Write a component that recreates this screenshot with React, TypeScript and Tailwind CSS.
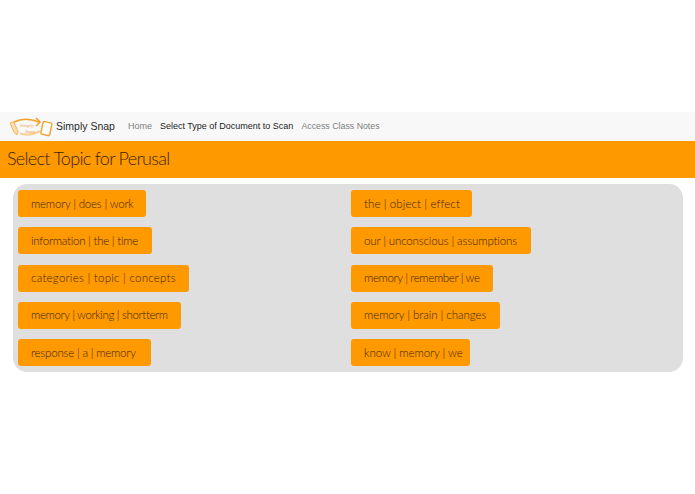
import React from "react";

const leftTopics = [
  { label: "memory | does | work", width: "w-[128px]", spacing: "tracking-[-0.2px]" },
  { label: "information | the | time", width: "w-[134px]", spacing: "tracking-[-0.25px]" },
  { label: "categories | topic | concepts", width: "w-[171px]", spacing: "tracking-[0.25px]" },
  { label: "memory | working | shortterm", width: "w-[163px]", spacing: "tracking-[-0.35px]" },
  { label: "response | a | memory", width: "w-[133px]", spacing: "tracking-[-0.2px]" },
];

const rightTopics = [
  { label: "the | object | effect", width: "w-[121px]", spacing: "tracking-[0.1px]" },
  { label: "our | unconscious | assumptions", width: "w-[180px]", spacing: "tracking-[-0.13px]" },
  { label: "memory | remember | we", width: "w-[142px]", spacing: "tracking-[-0.35px]" },
  { label: "memory | brain | changes", width: "w-[149px]", spacing: "tracking-[-0.05px]" },
  { label: "know | memory | we", width: "w-[119px]", spacing: "tracking-[-0.05px]" },
];

const Logo = () => (
  <svg width="44" height="20" viewBox="0 0 44 20" fill="none" className="shrink-0">
    <path d="M1 6 L4.5 4.5 L9 14 L8 18 L5 15.5 Z" fill="#fbdcae" stroke="#f4b562" strokeWidth="1" />
    <path d="M5 5 C13 1 21 1.5 30 5" stroke="#f5a021" strokeWidth="1.5" />
    <path d="M27 1 L31 5 L27 9" stroke="#f5a021" strokeWidth="1.5" />
    <path d="M11 16.5 C18 18.5 24 18 31 14" stroke="#fbd296" strokeWidth="2.2" />
    <rect x="33" y="5" width="9" height="13" rx="1.5" transform="rotate(12 37 11)" stroke="#f2a43a" strokeWidth="1.5" fill="#fff" />
    <text x="11" y="10" fontSize="5" fill="#e8a24a" fontFamily="Liberation Serif, serif" fontStyle="italic">Simply</text>
    <text x="16" y="16" fontSize="5" fill="#e8a24a" fontFamily="Liberation Serif, serif" fontStyle="italic">Snap</text>
  </svg>
);

const TopicButton = ({ label, width, spacing }: { label: string; width: string; spacing: string }) => (
  <button className={`${width} ${spacing} h-[27px] shrink-0 rounded-[3px] bg-[#ff9900] pl-[13px] text-left text-[11.5px] leading-[24px] whitespace-nowrap text-[#3a2505] font-light font-['Lato',sans-serif]`}>
    {label}
  </button>
);

export default function App() {
  return (
    <div className="min-h-[494px] bg-white pt-[112px] font-['Liberation_Sans',sans-serif]">
      <nav className="flex h-[29px] items-center bg-[#f8f8f8] pl-[9px]">
        <Logo />
        <span className="ml-[3px] text-[10.5px] text-[#2a2a2a]">Simply Snap</span>
        <span className="ml-[13px] text-[9px] text-[#808080]">Home</span>
        <span className="ml-[8px] text-[9px] text-[#1c1c1c]">Select Type of Document to Scan</span>
        <span className="ml-[8px] text-[8.8px] text-[#808080]">Access Class Notes</span>
      </nav>
      <header className="flex h-[37px] items-center bg-[#ff9900] pb-[3px] pl-[7px]">
        <h1 className="text-[18px] font-light text-[#3a2505] font-['Lato',sans-serif] tracking-[-0.7px]">Select Topic for Perusal</h1>
      </header>
      <main className="ml-[13px] mr-[12px] mt-[6px] grid h-[188px] grid-cols-2 rounded-[14px] bg-[#dfdfdf] pl-[5px] pt-[6px]">
        <div className="flex flex-col gap-[10.3px]">
          {leftTopics.map((t) => (
            <TopicButton key={t.label} label={t.label} width={t.width} spacing={t.spacing} />
          ))}
        </div>
        <div className="flex flex-col gap-[10.3px] pl-[0.5px]">
          {rightTopics.map((t) => (
            <TopicButton key={t.label} label={t.label} width={t.width} spacing={t.spacing} />
          ))}
        </div>
      </main>
    </div>
  );
}
